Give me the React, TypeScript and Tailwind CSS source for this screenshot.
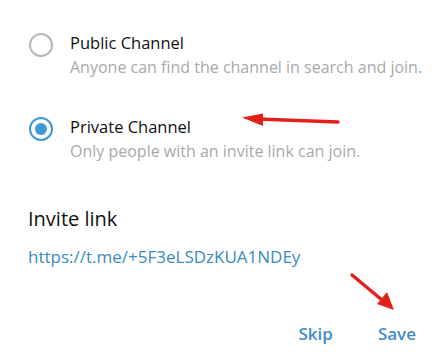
import React, { useState } from "react";

const options = [
  {
    id: "public",
    title: "Public Channel",
    desc: "Anyone can find the channel in search and join.",
  },
  {
    id: "private",
    title: "Private Channel",
    desc: "Only people with an invite link can join.",
  },
];

const Radio = ({ checked }: { checked: boolean }) => (
  <div
    className={`w-6 h-6 rounded-full border-2 flex items-center justify-center shrink-0 ${
      checked ? "border-[#3e9ad6]" : "border-[#b8b8b8]"
    }`}
  >
    {checked && <div className="w-3 h-3 rounded-full bg-[#3e9ad6]" />}
  </div>
);

export default function App() {
  const [type, setType] = useState("private");

  return (
    <div
      className="relative w-[440px] h-[358px] bg-white overflow-hidden"
      style={{ fontFamily: '"Open Sans", sans-serif' }}
    >
      <div className="flex flex-col pl-[29px] pt-[32px]">
        {options.map((o, i) => (
          <button
            key={o.id}
            onClick={() => setType(o.id)}
            className={`flex items-start gap-[17px] text-left ${i > 0 ? "mt-[38px]" : ""}`}
          >
            <div className="pt-px">
              <Radio checked={type === o.id} />
            </div>
            <div className="flex flex-col">
              <span className="text-[16.5px] leading-[22px] text-[#111111]">{o.title}</span>
              <span className="mt-[3px] text-[16px] leading-[21px] text-[#a9a9a9]">{o.desc}</span>
            </div>
          </button>
        ))}
      </div>

      <div className="flex flex-col pl-[28px] mt-[43px]">
        <span className="text-[20px] leading-[27px] text-[#111111]">Invite link</span>
        <span className="mt-[13px] text-[17px] leading-[23px] text-[#3a8bbf]">
          https://t.me/+5F3eLSDzKUA1NDEy
        </span>
      </div>

      <div className="flex justify-end gap-[45px] pr-[24px] mt-[54px]">
        <button className="text-[17px] leading-[23px] font-semibold text-[#3f8ccb]">Skip</button>
        <button className="text-[17px] leading-[23px] font-semibold text-[#3f8ccb]">Save</button>
      </div>

      {/* annotation arrows */}
      <svg className="absolute inset-0 pointer-events-none" width="440" height="358">
        <line x1="338" y1="122" x2="258" y2="119" stroke="#e3211b" strokeWidth="3.5" strokeLinecap="round" />
        <polygon points="242,117.5 263,113.5 263,126" fill="#e3211b" />
        <line x1="352" y1="275" x2="382" y2="300" stroke="#e3211b" strokeWidth="3.5" strokeLinecap="round" />
        <polygon points="394,310 377,304 387,292" fill="#e3211b" />
      </svg>
    </div>
  );
}
